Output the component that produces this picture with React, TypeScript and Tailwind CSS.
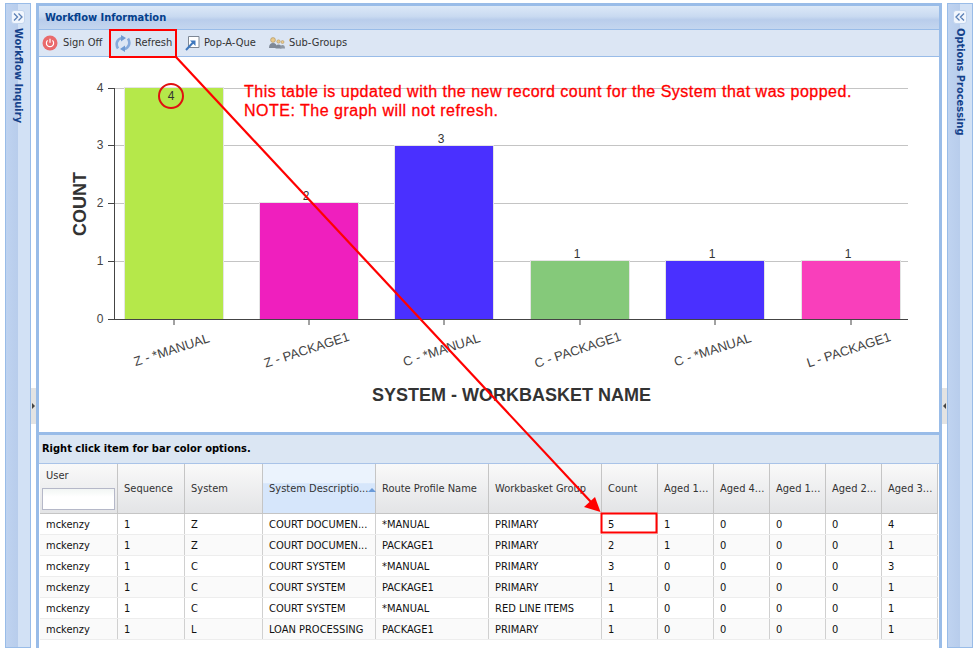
const uiFont = "font-['DejaVu_Sans_Condensed','DejaVu_Sans',sans-serif] [font-stretch:condensed]";
const cols = 'grid grid-cols-[78px_67px_78px_113px_113px_113px_56px_56px_56px_56px_56px_56px]';

const headers = ['Sequence', 'System', 'System Descriptio...', 'Route Profile Name', 'Workbasket Group', 'Count', 'Aged 1...', 'Aged 4...', 'Aged 1...', 'Aged 2...', 'Aged 3...'];

const rows = [
  ['mckenzy', '1', 'Z', 'COURT DOCUMEN...', '*MANUAL', 'PRIMARY', '5', '1', '0', '0', '0', '4'],
  ['mckenzy', '1', 'Z', 'COURT DOCUMEN...', 'PACKAGE1', 'PRIMARY', '2', '1', '0', '0', '0', '1'],
  ['mckenzy', '1', 'C', 'COURT SYSTEM', '*MANUAL', 'PRIMARY', '3', '0', '0', '0', '0', '3'],
  ['mckenzy', '1', 'C', 'COURT SYSTEM', 'PACKAGE1', 'PRIMARY', '1', '0', '0', '0', '0', '1'],
  ['mckenzy', '1', 'C', 'COURT SYSTEM', '*MANUAL', 'RED LINE ITEMS', '1', '0', '0', '0', '0', '1'],
  ['mckenzy', '1', 'L', 'LOAN PROCESSING', 'PACKAGE1', 'PRIMARY', '1', '0', '0', '0', '0', '1'],
];

const bars = [
  { x: 125, y: 88, fill: '#b5e84a', label: 'Z - *MANUAL', count: 4, lx: 171, ly: 100 },
  { x: 260, y: 203, fill: '#ef1fbe', label: 'Z - PACKAGE1', count: 2, lx: 306, ly: 200 },
  { x: 395, y: 146, fill: '#4a30ff', label: 'C - *MANUAL', count: 3, lx: 441, ly: 143 },
  { x: 531, y: 261, fill: '#85c97a', label: 'C - PACKAGE1', count: 1, lx: 577, ly: 258 },
  { x: 666, y: 261, fill: '#4a30ff', label: 'C - *MANUAL', count: 1, lx: 712, ly: 258 },
  { x: 802, y: 261, fill: '#f93fbb', label: 'L - PACKAGE1', count: 1, lx: 848, ly: 258 },
];

const Chevrons = ({ left }: { left?: boolean }) => (
  <div className="w-[14px] h-[14px] mt-[6px] rounded-[3px] border border-[#c3d5ee] bg-[#f1f6fd] flex items-center justify-center">
    <svg width="10" height="8" viewBox="0 0 10 8" fill="none" stroke="#5a7fb5" strokeWidth="1.3">
      {left ? <path d="M4.5 0.5 1 4l3.5 3.5M9 0.5 5.5 4 9 7.5" /> : <path d="M1 0.5 4.5 4 1 7.5M5.5 0.5 9 4l-3.5 3.5" />}
    </svg>
  </div>
);

const SidePanel = ({ title, left }: { title: string; left?: boolean }) => (
  <div className="relative w-[26px] mt-[3px] border border-[#99bce8] bg-[linear-gradient(90deg,#bfd3f0_0%,#b8cdec_48%,#d2e1f5_50%,#d2e1f5_100%)] flex flex-col items-center shrink-0">
    <Chevrons left={left} />
    <span className="[writing-mode:vertical-rl] mt-[4px] text-[11px] leading-[14px] font-bold text-[#15428b]">{title}</span>
  </div>
);

const Splitter = ({ left }: { left?: boolean }) => (
  <div className="w-[5px] shrink-0 pt-[388px]">
    <div className="w-[5px] h-[36px] bg-[#e3e3e3] flex items-center justify-center">
      <span className={left ? 'w-0 h-0 border-y-[3px] border-y-transparent border-l-[3px] border-l-[#444]' : 'w-0 h-0 border-y-[3px] border-y-transparent border-r-[3px] border-r-[#444]'} />
    </div>
  </div>
);

const ToolButton = ({ icon, label, className }: { icon: React.ReactNode; label: string; className: string }) => (
  <div className={`flex items-center shrink-0 ${className}`}>
    {icon}
    <span className="pt-[1px] text-[11px] text-[#333]">{label}</span>
  </div>
);

const PowerIcon = () => (
  <svg width="16" height="16" viewBox="0 0 16 16" className="mr-[5px]">
    <circle cx="8" cy="8" r="7.5" fill="#e96a6c" />
    <path d="M5.6 5.4a3.6 3.6 0 1 0 4.8 0M8 3.8v4" fill="none" stroke="#fff" strokeWidth="1.2" />
  </svg>
);

const RefreshIcon = () => (
  <svg width="16" height="17" viewBox="0 0 16 17" fill="none" className="mr-[4px]">
    <path d="M3 13.5C0.5 9.5 1.5 4 7 3" stroke="#86aadb" strokeWidth="2.6" />
    <path d="M13 3.5C15.5 7.5 14.5 13 9 14" stroke="#86aadb" strokeWidth="2.6" />
    <path d="M6 0l5 3-5 3.5zM10 17l-5-3 5-3.5z" fill="#6f9bd4" />
  </svg>
);

const PopIcon = () => (
  <svg width="15" height="16" viewBox="0 0 15 16" fill="none" className="mr-[4px]">
    <path d="M3.5 1.5h10.5V12.5H3.5z" fill="#fff" stroke="#7d8794" />
    <path d="M1 15 9 6.5" stroke="#3f78bd" strokeWidth="2" />
    <path d="M5 5.5h5.5V11z" fill="#3f78bd" />
  </svg>
);

const GroupIcon = () => (
  <svg width="16" height="12" viewBox="0 0 16 12" className="mr-[4px]">
    <circle cx="4" cy="3" r="2.4" fill="#e9c98a" stroke="#a88f5f" strokeWidth=".6" />
    <path d="M0 11c0-3.5 1.5-5 4-5s4 1.5 4 5z" fill="#7f8997" />
    <circle cx="9.5" cy="4.5" r="1.7" fill="#e9c98a" stroke="#a88f5f" strokeWidth=".5" />
    <path d="M6.5 11.5c0-3 1-4 3-4s3 1 3 4z" fill="#7f8997" />
    <circle cx="13.5" cy="5" r="1.5" fill="#e9c98a" stroke="#a88f5f" strokeWidth=".5" />
    <path d="M11 11.5c0-2.5 1-3.5 2.5-3.5s2.5 1 2.5 3.5z" fill="#8f99a6" />
  </svg>
);

const Chart = () => (
  <svg viewBox="39 57 900 375" width="900" height="375" className="block">
    {[88, 145, 203, 261].map((y) => (
      <line key={y} x1="114" x2="908" y1={y + 0.5} y2={y + 0.5} stroke="#c4c4c4" />
    ))}
    {bars.map((b) => (
      <g key={b.x}>
        <rect x={b.x - 1} y={b.y - 1} width="100" height={320 - b.y} fill="#e4e4e4" />
        <rect x={b.x} y={b.y} width="98" height={319 - b.y} fill={b.fill} />
        <line x1={b.x + 49} x2={b.x + 49} y1="319" y2="325" stroke="#444" />
        <text x={b.lx} y={b.ly} textAnchor="middle" fontSize="12" fill="#333" fontFamily="'Liberation Sans',sans-serif">{b.count}</text>
        <text
          x={b.x + 48}
          y="354"
          textAnchor="middle"
          fontSize="13"
          fill="#444"
          fontFamily="'Liberation Sans',sans-serif"
          transform={`rotate(-18 ${b.x + 48} 354)`}
        >
          {b.label}
        </text>
      </g>
    ))}
    <path d="M114.5 88v231.5M108 319.5h800M108 88.5h6M108 145.5h6M108 203.5h6M108 261.5h6" stroke="#444" fill="none" />
    {[[92, '4'], [149, '3'], [207, '2'], [265, '1'], [323, '0']].map(([y, t]) => (
      <text key={t} x="100" y={y} textAnchor="middle" fontSize="12" fill="#444" fontFamily="'Liberation Sans',sans-serif">{t}</text>
    ))}
    <text transform="translate(86 204) rotate(-90)" textAnchor="middle" fontSize="18" fontWeight="bold" fill="#333" fontFamily="'Liberation Sans',sans-serif">COUNT</text>
    <text x="511.5" y="401" textAnchor="middle" fontSize="18" fontWeight="bold" fill="#333" fontFamily="'Liberation Sans',sans-serif">SYSTEM - WORKBASKET NAME</text>
  </svg>
);

const Annotations = () => (
  <svg width="978" height="648" viewBox="0 0 978 648" fill="none" className="absolute left-0 top-0 pointer-events-none">
    <rect x="110" y="30" width="66" height="27" stroke="#f00" strokeWidth="2" />
    <rect x="601.5" y="513.5" width="55" height="19" stroke="#f00" strokeWidth="2" />
    <circle cx="171" cy="96" r="12" stroke="#e01010" strokeWidth="2" />
    <path d="M176 57 591 502" stroke="#f00" strokeWidth="2.2" />
    <path d="M600.5 512 584 507 595 497z" fill="#f00" />
  </svg>
);

export default function App() {
  return (
    <div className={`relative flex w-[978px] h-[648px] overflow-hidden bg-white pl-[5px] ${uiFont}`}>
      <SidePanel title="Workflow Inquiry" />
      <Splitter left />

      <main className="w-[906px] shrink-0 mt-[3px] border-x-[3px] border-t-[3px] border-[#99bce8] flex flex-col">
        <div className="h-[24px] flex items-center pl-[6px] pt-[1px] bg-[linear-gradient(180deg,#dce8f7_0%,#c9daf1_45%,#b9cdeb_60%,#c4d6ef_100%)] border-b border-[#99bce8]">
          <span className="text-[11px] font-bold text-[#04408c]">Workflow Information</span>
        </div>
        <div className="h-[27px] flex items-center bg-[#dce6f4] border-b border-[#99bce8]">
          <ToolButton icon={<PowerIcon />} label="Sign Off" className="ml-[3px] w-[73px]" />
          <ToolButton icon={<RefreshIcon />} label="Refresh" className="w-[70px]" />
          <ToolButton icon={<PopIcon />} label="Pop-A-Que" className="w-[84px]" />
          <ToolButton icon={<GroupIcon />} label="Sub-Groups" className="" />
        </div>

        <div className="h-[375px] bg-white">
          <Chart />
        </div>

        <div className="h-[3px] bg-[#99bce8]" />

        <div className="h-[29px] flex items-center pl-[3px] bg-[#dbe6f3] border-b border-[#a9c3e8]">
          <span className="text-[11px] font-bold text-black">Right click item for bar color options.</span>
        </div>

        <div className={`${cols} ml-[1px] w-[898px] h-[50px] border-b border-[#c5c5c5] text-[11px] text-[#333]`}>
          <div className="flex flex-col border-r border-[#c5c5c5] bg-[linear-gradient(180deg,#f9f9f9,#e3e4e6)]">
            <span className="pl-[6px] pt-[5px] leading-[14px]">User</span>
            <input className="ml-[2px] mt-[5px] w-[73px] h-[22px] border border-[#b5b8c8] bg-[linear-gradient(180deg,#f2f6f4,#fff_40%)]" />
          </div>
          {headers.map((h, i) => (
            <div
              key={i}
              className={
                i === 2
                  ? 'flex items-center justify-between pl-[6px] pr-[3px] pt-[2px] border-r border-[#c5c5c5] bg-[linear-gradient(180deg,#ebf3fd_0%,#ebf3fd_39%,#d6e6fb_40%,#d6e6fb_100%)]'
                  : 'flex items-center pl-[6px] pt-[2px] border-r border-[#c5c5c5] bg-[linear-gradient(180deg,#f9f9f9,#e3e4e6)]'
              }
            >
              <span className="whitespace-nowrap">{h}</span>
              {i === 2 && <span className="w-0 h-0 border-x-[4px] border-x-transparent border-b-[4px] border-b-[#6a9ad8]" />}
            </div>
          ))}
        </div>

        {rows.map((r, ri) => (
          <div key={ri} className={`${cols} ml-[1px] w-[898px] h-[21px] border-b border-[#ededed] text-[11px] text-[#111] ${ri % 2 ? 'bg-[#fafafa]' : 'bg-white'}`}>
            {r.map((c, ci) => (
              <div key={ci} className="flex items-center pt-[2px] pl-[6px] whitespace-nowrap border-r border-[#d0d0d0]">
                {c}
              </div>
            ))}
          </div>
        ))}
      </main>

      <Splitter />
      <SidePanel title="Options Processing" left />

      <Annotations />
      <p className="absolute left-[244px] top-[82px] font-['Liberation_Sans',sans-serif] [font-stretch:normal] [-webkit-text-stroke:0.3px_#f00] text-[16px] leading-[19px] text-[#f00] tracking-[0.5px] whitespace-nowrap">
        This table is updated with the new record count for the System that was popped.
        <br />
        NOTE: The graph will not refresh.
      </p>
    </div>
  );
}
